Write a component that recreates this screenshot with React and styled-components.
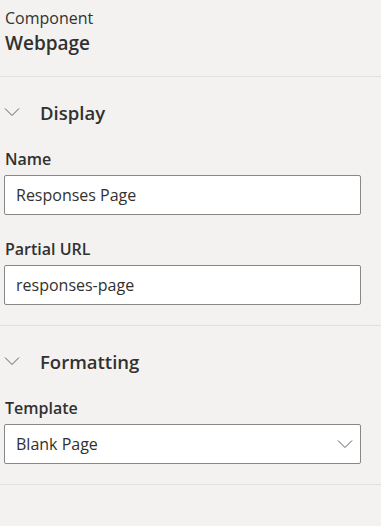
import React from "react";
import styled, { createGlobalStyle } from "styled-components";

const GlobalStyle = createGlobalStyle`
  html, body {
    margin: 0;
    padding: 0;
    background: #f3f2f1;
  }
  body {
    font-family: "Segoe UI", "Open Sans", "Noto Sans", sans-serif;
    color: #323130;
  }
`;

const Panel = styled.div`
  width: 381px;
  min-height: 526px;
  background: #f3f2f1;
`;

const Header = styled.div`
  padding: 6px 5px 20px;
  border-bottom: 1px solid #e1dfdd;
`;

const Kind = styled.div`
  font-size: 16px;
  line-height: 24px;
`;

const Title = styled.div`
  font-size: 19px;
  font-weight: 600;
  line-height: 26px;
`;

const Section = styled.section`
  padding: 0 20px 20px 4px;
  border-bottom: 1px solid #e1dfdd;
`;

const SectionHead = styled.div`
  display: flex;
  align-items: center;
  height: 70px;
  gap: 20px;
  font-size: 18.5px;
  font-weight: 600;
`;

const Field = styled.div`
  display: flex;
  flex-direction: column;
  & + & {
    margin-top: 22px;
  }
`;

const Label = styled.label`
  font-size: 16px;
  font-weight: 600;
  line-height: 22px;
  padding: 1px 1px 5px;
`;

const Box = styled.div`
  box-sizing: border-box;
  height: 40px;
  display: flex;
  align-items: center;
  justify-content: space-between;
  padding: 0 7px 0 11px;
  background: #ffffff;
  border: 1px solid #8a8886;
  border-radius: 2px;
  font-size: 16px;
`;

const Chevron = () => (
  <svg width={16} height={16} viewBox="0 0 16 16" fill="none">
    <path d="M1 4.5 L8 11.5 L15 4.5" stroke="#605e5c" strokeWidth="1" />
  </svg>
);

export default function App() {
  return (
    <Panel>
      <GlobalStyle />
      <Header>
        <Kind>Component</Kind>
        <Title>Webpage</Title>
      </Header>
      <Section>
        <SectionHead>
          <Chevron />
          Display
        </SectionHead>
        <Field>
          <Label>Name</Label>
          <Box>Responses Page</Box>
        </Field>
        <Field>
          <Label>Partial URL</Label>
          <Box>responses-page</Box>
        </Field>
      </Section>
      <Section>
        <SectionHead>
          <Chevron />
          Formatting
        </SectionHead>
        <Field>
          <Label>Template</Label>
          <Box>
            Blank Page
            <Chevron />
          </Box>
        </Field>
      </Section>
    </Panel>
  );
}
